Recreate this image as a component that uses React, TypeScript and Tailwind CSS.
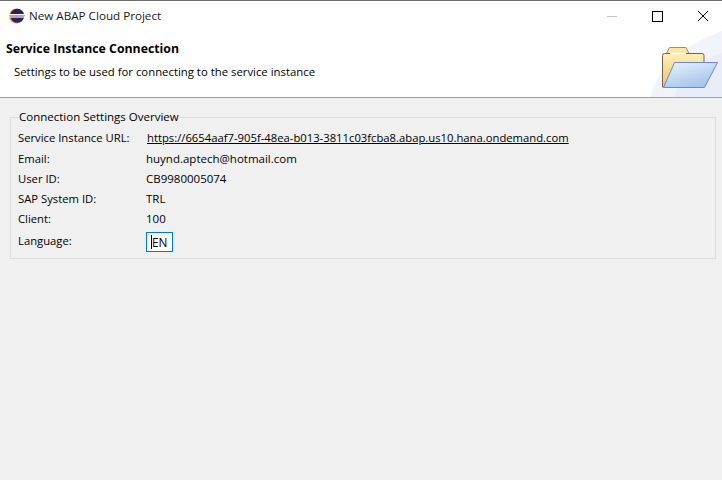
const font = "[font-family:'Open_Sans','Noto_Sans',sans-serif]";

const EclipseIcon = () => (
  <svg width="16" height="16" viewBox="0 0 16 16">
    <circle cx="7.5" cy="8" r="7.5" fill="#f7941e" />
    <circle cx="8.2" cy="7.8" r="7" fill="#2c2255" />
    <rect x="0" y="6" width="16" height="1" fill="#fff" />
    <rect x="0" y="7" width="16" height="1.6" fill="#a9a6c4" />
    <rect x="0" y="8.6" width="16" height="1" fill="#fff" />
  </svg>
);

const FolderIcon = () => (
  <svg width="58" height="44" viewBox="0 0 58 44">
    <defs>
      <linearGradient id="back" x1="0" y1="0" x2="0" y2="1">
        <stop offset="0" stopColor="#fdf0b8" />
        <stop offset="1" stopColor="#e9c766" />
      </linearGradient>
      <linearGradient id="front" x1="0" y1="0" x2="0.6" y2="1">
        <stop offset="0" stopColor="#e8f5fe" />
        <stop offset="1" stopColor="#a6c3ea" />
      </linearGradient>
    </defs>
    <path d="M4.5 6.5 L7.5 0.5 H24 L27 6.5 Z" fill="#f8e7a8" stroke="#a08c6c" />
    <path d="M0.5 40 V8.5 Q0.5 6.5 2.5 6.5 H40 Q42 6.5 42 8.5 V16 L10 40 Z" fill="url(#back)" stroke="#7d5f50" />
    <path d="M8 6.5 H24" stroke="#fffbe8" strokeWidth="1.5" />
    <path d="M1.5 40.5 L12.5 15.5 H55.5 L42.5 40.5 Z" fill="url(#front)" stroke="#6c86cf" strokeLinejoin="round" />
  </svg>
);

const rows = [
  { label: "Email:", value: "huynd.aptech@hotmail.com" },
  { label: "User ID:", value: "CB9980005074" },
  { label: "SAP System ID:", value: "TRL" },
  { label: "Client:", value: "100" },
];

export default function App() {
  return (
    <div className={`${font} flex h-[480px] w-[722px] flex-col overflow-hidden bg-[#f0f0f0] text-[11.27px] leading-[16px] text-black`}>
      {/* title bar */}
      <div className="flex h-[31px] shrink-0 items-center border-t border-[#6f6f6f] bg-white pl-[9px]">
        <EclipseIcon />
        <span className="ml-[4px] text-[11.65px] text-[#1a1a1a]">New ABAP Cloud Project</span>
        <div className="ml-auto flex items-center">
          <div className="flex w-[38px] justify-center">
            <div className="h-px w-[10px] bg-[#c4c4c4]" />
          </div>
          <div className="flex w-[53px] justify-center">
            <div className="h-[11px] w-[11px] border border-black" />
          </div>
          <div className="flex w-[38px] justify-center">
            <svg width="10" height="10" viewBox="0 0 10 10">
              <path d="M0 0 L10 10 M10 0 L0 10" stroke="#000" strokeWidth="1" />
            </svg>
          </div>
        </div>
      </div>

      {/* banner */}
      <div className="relative h-[67px] shrink-0 overflow-hidden border-b border-[#a0a0a0] bg-white">
        <svg className="absolute right-0 top-0" width="72" height="66" viewBox="0 0 72 66">
          <path d="M0 66 Q12 22 72 0 V66 Z" fill="#f1f4fb" />
          <path d="M24 66 Q36 34 72 22 V66 Z" fill="#e9edf8" />
        </svg>
        <div className="absolute left-[662px] top-[16px]">
          <FolderIcon />
        </div>
        <div className="pl-[6px] pt-[10px] text-[12.3px] font-bold">Service Instance Connection</div>
        <div className="pl-[14px] pt-[7px] text-[11.35px]">Settings to be used for connecting to the service instance</div>
      </div>

      {/* group */}
      <div className="pl-[10px] pr-[6px] pt-[11px]">
        <fieldset className="h-[150px] border border-[#dcdcdc] pl-[7px] pt-[5px]">
          <legend className="px-[1px] text-[11.5px] leading-[16px]">Connection Settings Overview</legend>
          <div className="grid grid-cols-[128px_1fr] items-center">
            <span className="h-[20px]">Service Instance URL:</span>
            <span className="h-[20px] pl-px underline">
              https://6654aaf7-905f-48ea-b013-3811c03fcba8.abap.us10.hana.ondemand.com
            </span>
            {rows.map((row) => (
              <div key={row.label} className="contents">
                <span className="h-[20px] pt-[1px]">{row.label}</span>
                <span className="h-[20px] pt-[1px] text-[11.5px]">{row.value}</span>
              </div>
            ))}
            <span>Language:</span>
            <div className="mt-[2px] flex h-[20px] w-[27px] items-center border border-[#0078d7] bg-white pl-[4px]">
              <span className="border-l border-black text-[11.8px] leading-[14px]">EN</span>
            </div>
          </div>
        </fieldset>
      </div>
    </div>
  );
}
